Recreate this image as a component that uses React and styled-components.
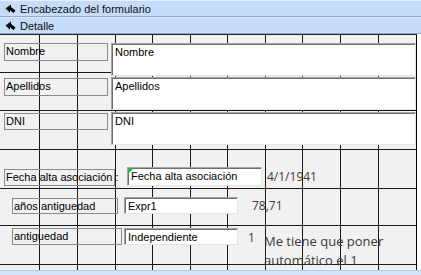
import React from 'react'
import styled, { createGlobalStyle } from 'styled-components'

const GlobalStyle = createGlobalStyle`
  html, body {
    margin: 0;
    padding: 0;
    background: #ffffff;
  }
`

// grid lines of the design surface (x from left edge, y from top of the detail section)
const colLines = [39, 77, 115, 152, 190, 227, 265, 302, 340, 378]
const rowLines = [37, 75, 114, 153, 190, 229]

const gridBg = [
  ...colLines.map((x) => `linear-gradient(#1a1a1a, #1a1a1a) ${x}px 0 / 1px 100% no-repeat`),
  ...rowLines.map((y) => `linear-gradient(#1a1a1a, #1a1a1a) 0 ${y}px / 100% 1px no-repeat`),
].join(', ')

const labels = [
  { text: 'Nombre', x: 4, y: 8, w: 104, h: 18 },
  { text: 'Apellidos', x: 4, y: 43, w: 104, h: 18 },
  { text: 'DNI', x: 4, y: 78, w: 104, h: 17 },
  { text: 'Fecha alta asociación :', x: 4, y: 134, w: 111, h: 17 },
  { text: 'años antiguedad', x: 12, y: 163, w: 106, h: 16 },
  { text: 'antiguedad', x: 12, y: 193, w: 110, h: 17 },
]

const fields = [
  { text: 'Nombre', x: 111, y: 8, w: 305, h: 33 },
  { text: 'Apellidos', x: 111, y: 42, w: 305, h: 33 },
  { text: 'DNI', x: 111, y: 77, w: 305, h: 33 },
  { text: 'Fecha alta asociación', x: 127, y: 132, w: 135, h: 19, flag: true },
  { text: 'Expr1', x: 124, y: 162, w: 114, h: 17 },
  { text: 'Independiente', x: 124, y: 193, w: 114, h: 17 },
]

const notes = [
  { text: '4/1/1941', x: 267, y: 132, size: 12 },
  { text: '78,71', x: 252, y: 161, size: 12 },
  { text: '1', x: 248, y: 193, size: 12 },
  { text: 'Me tiene que poner\nautomático el 1', x: 264, y: 197, size: 13 },
]

function SectionArrow() {
  return (
    <svg width="11" height="10" viewBox="0 0 11 10">
      <path d="M0.5 4.5 L6 0.5 L6 3 L10.5 6.5 L8.5 9 L5 6.3 L5 8.8 Z" fill="#000" />
    </svg>
  )
}

export default function App() {
  return (
    <>
      <GlobalStyle />
      <Designer>
        <SectionBar>
          <SectionArrow />
          <span>Encabezado del formulario</span>
        </SectionBar>
        <SectionBar>
          <SectionArrow />
          <span>Detalle</span>
        </SectionBar>
        <Surface>
          {labels.map((l) => (
            <Label key={l.text} style={{ left: l.x, top: l.y, width: l.w, height: l.h }}>
              {l.text}
            </Label>
          ))}
          {fields.map((f) => (
            <TextBox key={f.text} $flag={f.flag} style={{ left: f.x, top: f.y, width: f.w, height: f.h }}>
              {f.text}
            </TextBox>
          ))}
          {notes.map((n) => (
            <Note key={n.text} $size={n.size} style={{ left: n.x, top: n.y }}>
              {n.text}
            </Note>
          ))}
        </Surface>
        <BottomStrip />
      </Designer>
    </>
  )
}

const Designer = styled.div`
  width: 421px;
  height: 275px;
  display: flex;
  flex-direction: column;
  overflow: hidden;
  background: #ffffff;
`

const SectionBar = styled.div`
  height: 15px;
  flex: none;
  display: flex;
  align-items: center;
  gap: 4px;
  padding-left: 5px;
  background: #c5dcfa;
  border-top: 1px solid #dcebfd;
  border-bottom: 1px solid #8eaad3;
  &:first-child {
    border-top-color: #e6f0fd;
  }
  span {
    font-family: 'Liberation Sans', Arial, sans-serif;
    font-size: 11px;
    color: #111;
  }
`

const Surface = styled.div`
  position: relative;
  flex: 1;
  width: 416px;
  border-top: 1px solid #222;
  border-right: 1px solid #000;
  background: ${gridBg}, #f1f1f1;
`

const Label = styled.div`
  position: absolute;
  box-sizing: border-box;
  border: 1px solid #8a8a8a;
  padding: 0 0 0 1px;
  font-family: 'Liberation Sans', Arial, sans-serif;
  font-size: 11px;
  line-height: 14px;
  color: #000;
  white-space: nowrap;
`

const TextBox = styled.div`
  position: absolute;
  box-sizing: border-box;
  background: #ffffff;
  border-top: 1px solid #a5a5a5;
  border-left: 1px solid #a5a5a5;
  border-right: 1px solid #e4e4e4;
  border-bottom: 1px solid #e4e4e4;
  box-shadow: inset 1px 1px 0 #6e6e6e;
  padding: 1px 0 0 3px;
  font-family: 'Liberation Sans', Arial, sans-serif;
  font-size: 11px;
  line-height: 14px;
  color: #000;
  white-space: nowrap;
  overflow: hidden;
  &::before {
    content: '';
    display: ${(p) => (p.$flag ? 'block' : 'none')};
    position: absolute;
    left: 0;
    top: 0;
    border-top: 6px solid #2fb34a;
    border-right: 6px solid transparent;
  }
`

const Note = styled.div`
  position: absolute;
  font-family: 'Open Sans', 'Noto Sans', sans-serif;
  font-size: ${(p) => p.$size}px;
  line-height: 19px;
  color: #3a3a3a;
  white-space: pre;
`

const BottomStrip = styled.div`
  height: 4px;
  flex: none;
  background: #d3e4f8;
  border-top: 1px solid #b8cfe9;
`
